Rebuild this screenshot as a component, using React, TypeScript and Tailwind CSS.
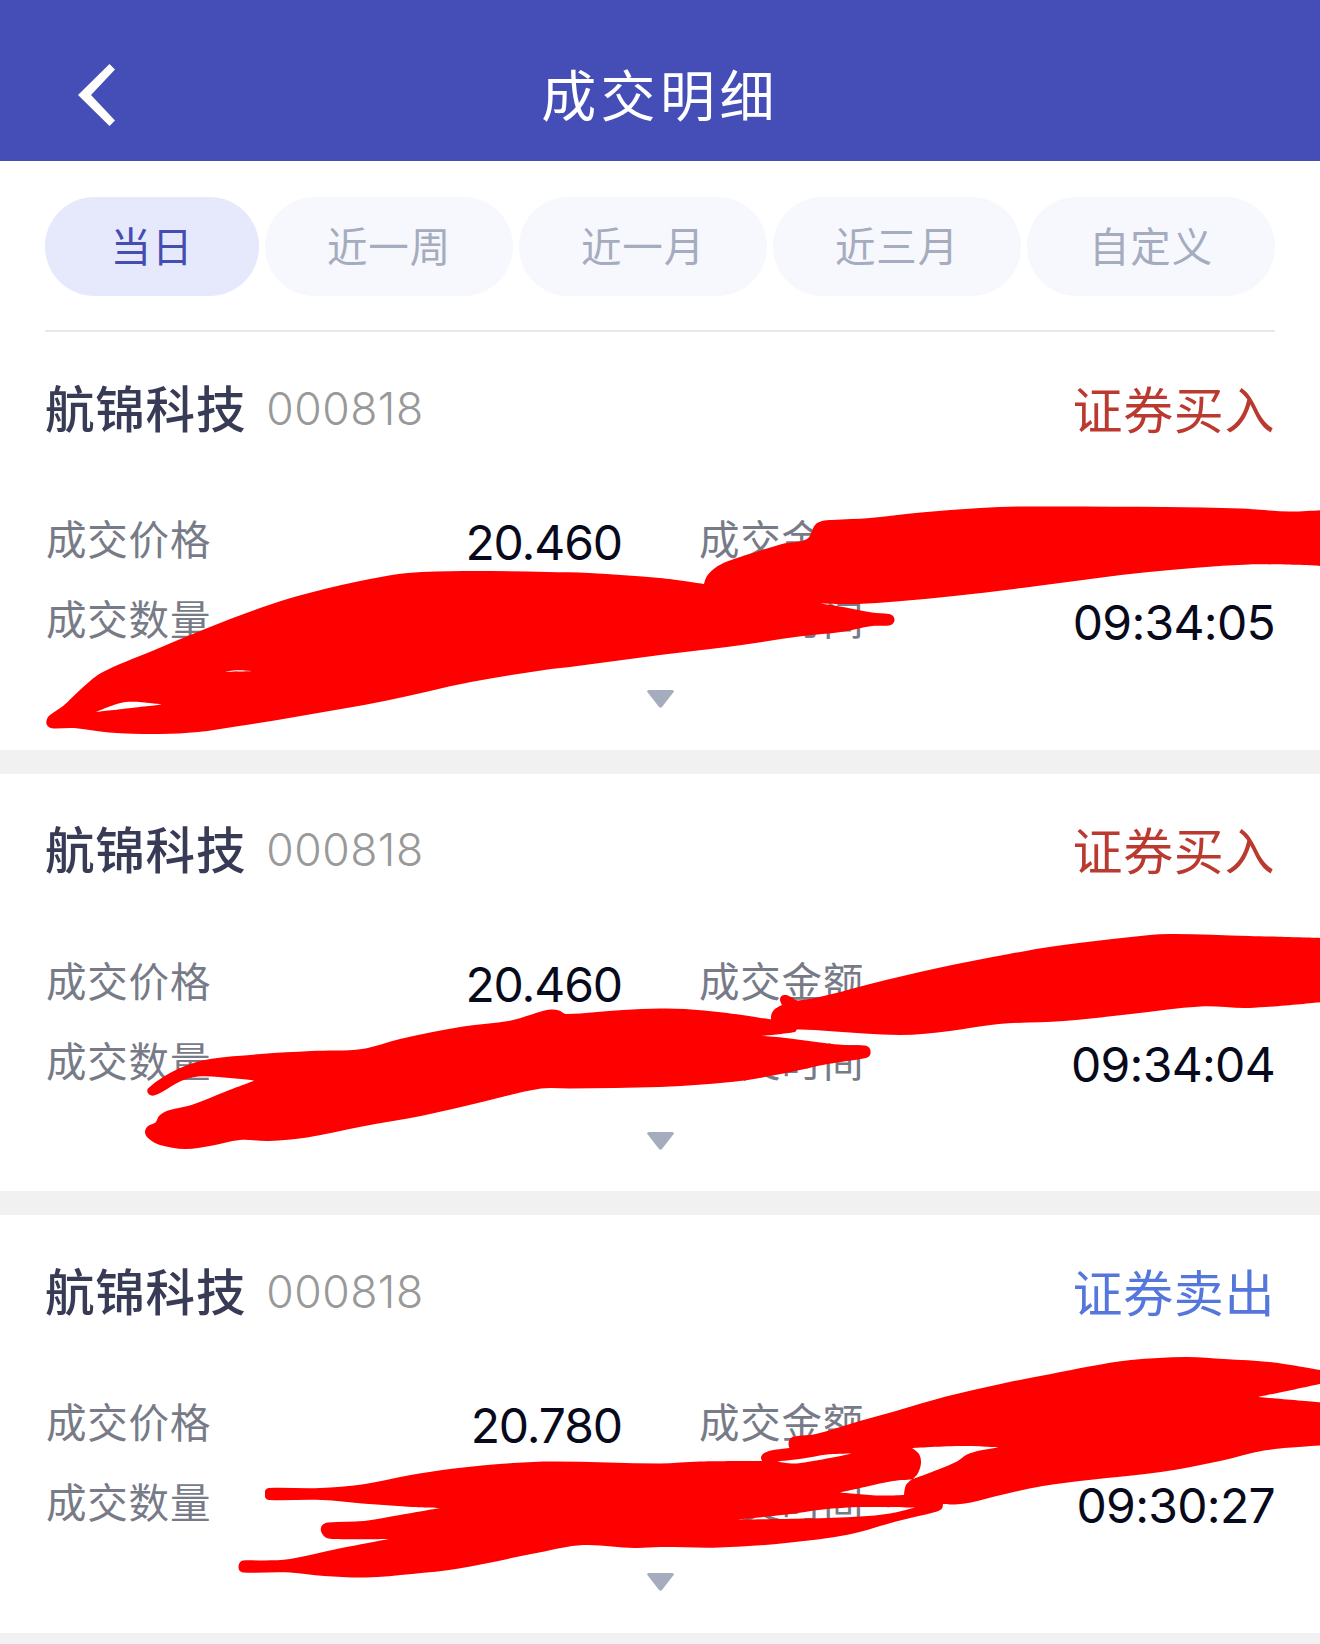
type Point = [number, number];

const ranges = [
  { label: '当日', width: 'w-[214px]' },
  { label: '近一周', width: 'w-[248px]' },
  { label: '近一月', width: 'w-[248px]' },
  { label: '近三月', width: 'w-[248px]' },
  { label: '自定义', width: 'w-[248px]' },
];

const trades = [
  { name: '航锦科技', code: '000818', type: '证券买入', buy: true, price: '20.460', time: '09:34:05' },
  { name: '航锦科技', code: '000818', type: '证券买入', buy: true, price: '20.460', time: '09:34:04' },
  { name: '航锦科技', code: '000818', type: '证券卖出', buy: false, price: '20.780', time: '09:30:27' },
];

// Brush marks: the first contour is the outline, the others are gaps in it
const marks: Point[][][] = [
  [
    [
      [50, 715], [47, 719], [46.5, 724], [49.5, 727.5], [55, 728.5], [74, 728], [109, 732.5], [160, 734], [198, 732],
      [236, 726.5], [295, 717], [387, 700.5], [471, 682], [551, 669], [570, 667], [660, 655], [727, 647], [803, 636],
      [841, 632], [872, 626], [889, 625.5], [893, 623.5], [894.5, 620], [893, 616], [889, 614], [872, 612.5],
      [837, 606], [820, 603.5], [858, 604], [896, 601.5], [954, 596], [1022, 588], [1098, 578], [1144, 572.5],
      [1249, 564.5], [1322, 566], [1322, 510], [1289, 511.5], [1241, 508.5], [1165, 507], [1022, 506.5], [980, 508],
      [921, 512.5], [870, 518], [832, 520], [822, 521], [815, 525], [807, 539], [782, 544], [750, 554], [727, 561.5],
      [715, 568], [707, 576], [704, 584], [660, 578], [589, 573], [547, 572], [463, 571], [408, 573], [370, 579],
      [311, 592.5], [269, 605], [210, 627], [151, 651.5], [101, 673], [80, 690], [63, 706],
    ],
    [[96, 712], [126, 702], [162, 704.5]],
    [[225, 671.8], [237, 670.3], [252, 671.3]],
  ],
  [
    [
      [148, 1088.5], [147.5, 1092], [150, 1095], [154, 1095.5], [162, 1092], [181, 1081], [198, 1076.5], [219, 1077],
      [254.5, 1080.5], [227, 1091], [191.5, 1105], [168, 1110.5], [159, 1116], [155.5, 1122.5], [148, 1126],
      [145, 1132], [148, 1138], [160, 1145], [185, 1149], [210, 1146], [240, 1140], [269, 1141], [307, 1137.5],
      [362, 1126.5], [421, 1116], [484, 1101.5], [541, 1088.5], [570, 1088.5], [660, 1087], [702, 1084.5],
      [744, 1080.5], [786, 1073], [828, 1064], [866, 1058], [870, 1055], [870.5, 1051], [869, 1047.5],
      [865, 1045.5], [845, 1045], [824, 1043], [786, 1038], [761, 1036], [795, 1032], [797, 1029.5], [828, 1031],
      [900, 1035], [950, 1031], [999, 1024], [1064, 1021], [1131, 1014], [1201, 1006.5], [1249, 1008],
      [1322, 1002], [1322, 938], [1249, 936], [1169, 934], [1131, 937], [1056, 946], [1009, 954], [938, 968],
      [870, 984], [832, 994], [798, 1000.5], [791, 997], [786, 995], [781.5, 996], [780, 1000], [782, 1005],
      [775, 1009], [771.5, 1014], [771, 1019.5], [723, 1012.5], [685, 1009], [660, 1008.5], [623, 1010],
      [566, 1014], [559, 1010.5], [551, 1009.5], [541, 1011.5], [511, 1020.5], [463, 1026.5], [400, 1039],
      [362, 1049], [311, 1051], [261, 1054], [210, 1059], [185, 1066], [164, 1076.5],
    ],
  ],
  [
    [
      [269, 1500], [265.5, 1498], [265, 1494], [265.5, 1490], [269, 1488], [320, 1488], [362, 1484.5], [408, 1475.5],
      [454, 1468.5], [513, 1463], [555, 1461.5], [660, 1463.5], [700, 1461.5], [762, 1461], [761, 1457.5],
      [763.5, 1453.5], [771, 1450.5], [789.5, 1448], [788.5, 1444], [790, 1439], [794, 1436.5], [816, 1434],
      [858, 1421.5], [896, 1411], [946, 1396.5], [1005, 1383], [1051, 1374], [1089, 1366.5], [1131, 1360],
      [1186, 1357], [1224, 1359], [1274, 1362.5], [1322, 1370.5], [1322, 1383.5], [1258, 1397], [1322, 1402.5],
      [1322, 1445.5], [1264, 1450.5], [1220, 1461], [1161, 1472], [1089, 1480], [1043, 1486], [1001, 1495],
      [971, 1502.5], [955, 1504.5], [943, 1504], [942, 1508.5], [937, 1511.5], [896, 1521.5], [849, 1534.5],
      [786, 1543], [719, 1547.5], [660, 1547], [635, 1548], [583, 1545], [539, 1552.5], [459, 1568.5], [412, 1574],
      [366, 1577.5], [324, 1576], [290, 1572.5], [243, 1572.5], [239.5, 1570.5], [238.5, 1567], [239.5, 1563],
      [243, 1560.5], [265, 1560.5], [290, 1559], [337, 1549], [389, 1539], [332, 1539], [325, 1537], [321, 1531],
      [322, 1525.5], [328, 1522.5], [364, 1521], [400, 1515], [440, 1508], [412, 1507], [362, 1503.5], [322, 1500],
    ],
    [[777, 1461.5], [803, 1458.5], [827, 1454.5], [852, 1453.5], [797, 1463.5]],
    [
      [912, 1448], [962, 1446], [999, 1447.5], [980, 1450.5], [967, 1454.5], [957, 1461.5], [937, 1470],
      [913, 1479], [918, 1473], [921, 1463], [919, 1454],
    ],
    [[840, 1492.5], [867, 1486.5], [893, 1481], [912, 1479.5], [906, 1485], [904, 1495], [878, 1495.5]],
    [
      [736, 1519.5], [787, 1514.5], [823, 1509.5], [860, 1507], [915, 1507.5], [890, 1513.5], [860, 1516.5],
      [807, 1518.5],
    ],
  ],
];

// Closed smooth curve through the points, with sharp corners kept
function smoothPath(points: Point[]) {
  const n = points.length;
  const handle = (i: number, reach: number): Point => {
    const [ax, ay] = points[(i + n - 1) % n];
    const [x, y] = points[i % n];
    const [bx, by] = points[(i + 1) % n];
    const inLen = Math.hypot(x - ax, y - ay);
    const outLen = Math.hypot(bx - x, by - y);
    const cos = ((x - ax) * (bx - x) + (y - ay) * (by - y)) / (inLen * outLen);
    if (cos < 0.45) return [x, y];
    const total = Math.hypot(bx - ax, by - ay);
    const k = (Math.min(reach > 0 ? outLen : inLen, total) * reach) / total;
    return [x + (bx - ax) * k, y + (by - ay) * k];
  };
  let d = `M${points[0].join(' ')}`;
  for (let i = 0; i < n; i++) {
    const end = points[(i + 1) % n];
    d += `C${handle(i, 0.33).join(' ')} ${handle((i + 1) % n, -0.33).join(' ')} ${end.join(' ')}`;
  }
  return d + 'Z';
}

function Field({ label, value, tracking = '' }: { label: string; value?: string; tracking?: string }) {
  return (
    <div className="flex h-20 items-center justify-between">
      <span className="pl-px text-[40.5px] leading-none tracking-[0.8px] text-[#777b88]">{label}</span>
      {value && <span className={`pt-[3px] text-[48px] leading-none text-[#080a1c] ${tracking}`}>{value}</span>}
    </div>
  );
}

function TradeCard({ trade }: { trade: (typeof trades)[number] }) {
  return (
    <section className="border-b-[24px] border-[#f1f1f1]">
      <div className="flex h-[417.6px] flex-col px-[45px] pt-[52.5px]">
        <div className="flex h-[52px] items-center justify-between">
          <div className="flex items-center">
            <h2 className="text-[49.5px] leading-none font-medium tracking-[0.8px] text-[#383b56]">{trade.name}</h2>
            <span className="ml-[20px] pb-[3px] text-[44.5px] leading-none font-[350] tracking-[0.5px] text-[#999999]">
              {trade.code}
            </span>
          </div>
          <span
            className={`text-[50px] leading-none tracking-[0.6px] ${trade.buy ? 'text-[#bb3a30]' : 'text-[#5577dc]'}`}
          >
            {trade.type}
          </span>
        </div>
        <div className="mt-[65px] grid grid-cols-2 gap-x-[76px]">
          <Field label="成交价格" value={trade.price} tracking="tracking-[-1.1px]" />
          <Field label="成交金额" />
          <Field label="成交数量" />
          <Field label="成交时间" value={trade.time} tracking="tracking-[-0.7px]" />
        </div>
        <svg className="mx-auto mt-[28.5px] h-[18px] w-[27px]" viewBox="0 0 27 18">
          <path d="M0 1.5Q0 0 2 0H25Q27 0 27 1.5L15 17Q13.5 18.5 12 17Z" fill="#a5acbe" />
        </svg>
      </div>
    </section>
  );
}

export default function App() {
  return (
    <div className="relative h-[1644px] w-[1320px] overflow-hidden bg-white font-['Inter','Noto_Sans_CJK_SC',sans-serif]">
      {/* Header */}
      <header className="flex h-[161px] items-center bg-[#454db7] px-[78px] pt-[29px] text-white">
        <svg className="h-[62px] w-[37px]" viewBox="0 0 37 62" fill="currentColor">
          <path d="M31.5 0L37 5.5L13 31L37 56.5L31.5 62L0 31Z" />
        </svg>
        <h1 className="mr-[37px] flex-1 pt-[3px] text-center text-[55px] leading-none tracking-[4.4px]">成交明细</h1>
      </header>

      {/* Date range */}
      <nav className="mx-[45px] flex h-[171px] justify-between border-b-2 border-[#e9e9e9] pt-9">
        {ranges.map((range, i) => (
          <button
            key={range.label}
            className={`flex h-[99px] items-center justify-center rounded-full pt-1 text-[40.5px] leading-none tracking-[0.9px] ${range.width} ${
              i === 0 ? 'bg-[#e6e9fc] text-[#454db0]' : 'bg-[#f6f8fd] text-[#a5acbe]'
            }`}
          >
            {range.label}
          </button>
        ))}
      </nav>

      {/* Trades */}
      {trades.map((trade) => (
        <TradeCard key={trade.time} trade={trade} />
      ))}

      {/* Brush marks over the private figures */}
      <svg className="pointer-events-none absolute inset-0" width="1320" height="1644" viewBox="0 0 1320 1644">
        {marks.map((contours, i) => (
          <path key={i} d={contours.map(smoothPath).join('')} fill="#ff0000" fillRule="evenodd" />
        ))}
      </svg>
    </div>
  );
}
